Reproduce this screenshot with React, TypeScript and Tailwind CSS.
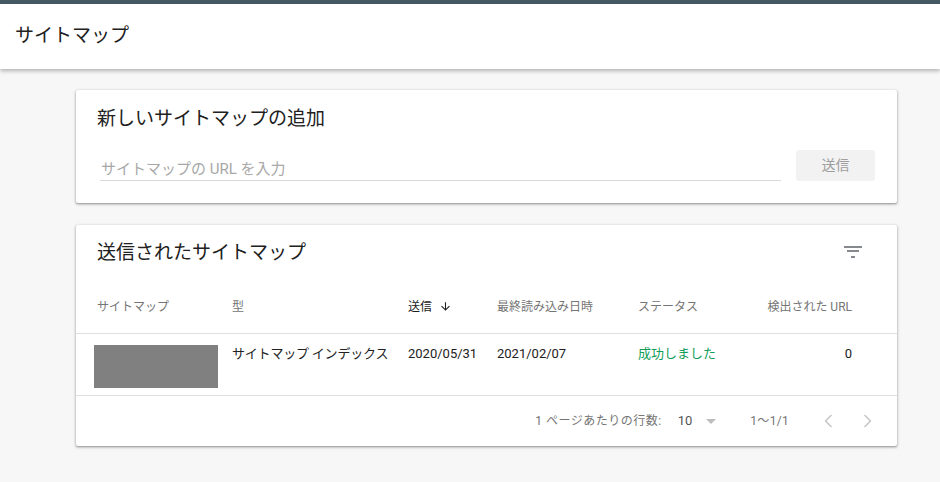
import React from 'react';

const font = { fontFamily: 'Roboto, "Noto Sans CJK JP", sans-serif' };

function FilterIcon() {
  return (
    <svg width="24" height="24" viewBox="0 0 24 24" className="text-[#5f6368]">
      <path d="M10 17.7h4v-1.4h-4v1.4zM3 6.3v1.4h18V6.3H3zm3 5.4h12v-1.4H6v1.4z" fill="currentColor" />
    </svg>
  );
}

function ArrowDown() {
  return (
    <svg width="13" height="13" viewBox="0 0 24 24" className="text-[#212121]">
      <path d="M20 12l-1.41-1.41L13 16.17V4h-2v12.17l-5.58-5.59L4 12l8 8 8-8z" fill="currentColor" />
    </svg>
  );
}

export default function App() {
  const cols = 'grid grid-cols-[138px_176px_89px_141px_128px_86px] px-[18px]';

  return (
    <div className="min-h-[482px] w-full bg-[#f7f7f7] text-[#212121]" style={font}>
      {/* Top strip + app header */}
      <div className="h-[4px] bg-[#455a64]" />
      <div className="relative z-10 h-[65px] bg-white shadow-[0_2px_4px_rgba(0,0,0,0.28)] flex items-center px-[15px]">
        <h1 className="text-[19px] leading-none text-[#212121] pb-[2px]">サイトマップ</h1>
      </div>

      <div className="pl-[76px] pr-[43px] pt-[21px] flex flex-col gap-[22px]">
        {/* Add new sitemap */}
        <div className="bg-white rounded-[2px] shadow-[0_1px_2px_rgba(0,0,0,0.3),0_1px_3px_1px_rgba(0,0,0,0.12)] h-[113px] px-[21px] pt-[19px]">
          <h2 className="text-[19px] leading-[20px] text-[#212121]">新しいサイトマップの追加</h2>
          <div className="mt-[21px] flex items-end">
            <div className="flex-1 ml-[3px] h-[25px] pt-[3px] border-b border-[#dadada] text-[15px] leading-[20px] text-[#a8a8a8] pl-[1px]">
              サイトマップの URL を入力
            </div>
            <button className="ml-[15px] mr-[1px] w-[79px] h-[31px] rounded-[3px] bg-[#f2f2f2] text-[14px] text-[#9e9e9e]">
              送信
            </button>
          </div>
        </div>

        {/* Submitted sitemaps */}
        <div className="bg-white rounded-[2px] shadow-[0_1px_2px_rgba(0,0,0,0.3),0_1px_3px_1px_rgba(0,0,0,0.12)]">
          <div className="h-[54px] flex items-center justify-between pl-[21px] pr-[32px]">
            <h2 className="text-[19px] leading-none text-[#212121]">送信されたサイトマップ</h2>
            <FilterIcon />
          </div>

          <div className={`${cols} h-[55px] items-center pt-[1px] border-b border-[#e0e0e0] text-[12px] text-[#757575]`}>
            <div className="pl-[3px]">サイトマップ</div>
            <div>型</div>
            <div className="flex items-center gap-[7px] text-[#212121]">
              送信
              <ArrowDown />
            </div>
            <div>最終読み込み日時</div>
            <div>ステータス</div>
            <div className="text-right">検出された URL</div>
          </div>

          <div className={`${cols} h-[62px] items-start pt-[11px] border-b border-[#e0e0e0] text-[13px] leading-[18px] text-[#212121]`}>
            <div className="w-[124px] h-[43px] bg-[#808080]" />
            <div className="tracking-[-0.2px]">サイトマップ インデックス</div>
            <div>2020/05/31</div>
            <div>2021/02/07</div>
            <div className="text-[#0f9d58]">成功しました</div>
            <div className="text-right">0</div>
          </div>

          <div className="h-[50px] flex items-center justify-end pr-[18px] text-[12px] text-[#757575]">
            <span className="tracking-[0.5px]">1 ページあたりの行数:</span>
            <span className="ml-[16px] text-[13px] text-[#555]">10</span>
            <span className="ml-[14px] w-0 h-0 border-l-[5px] border-r-[5px] border-t-[5px] border-l-transparent border-r-transparent border-t-[#bdbdbd]" />
            <span className="ml-[34px] tracking-[0.3px]">1〜1/1</span>
            <svg width="24" height="24" viewBox="0 0 24 24" className="ml-[28px] text-[#c4c4c4]">
              <path d="M15 6.5l-1-1L7.5 12l6.5 6.5 1-1L9.5 12z" fill="currentColor" />
            </svg>
            <svg width="24" height="24" viewBox="0 0 24 24" className="ml-[14px] text-[#c4c4c4]">
              <path d="M9 6.5l1-1 6.5 6.5-6.5 6.5-1-1 5.5-5.5z" fill="currentColor" />
            </svg>
          </div>
        </div>
      </div>
    </div>
  );
}
